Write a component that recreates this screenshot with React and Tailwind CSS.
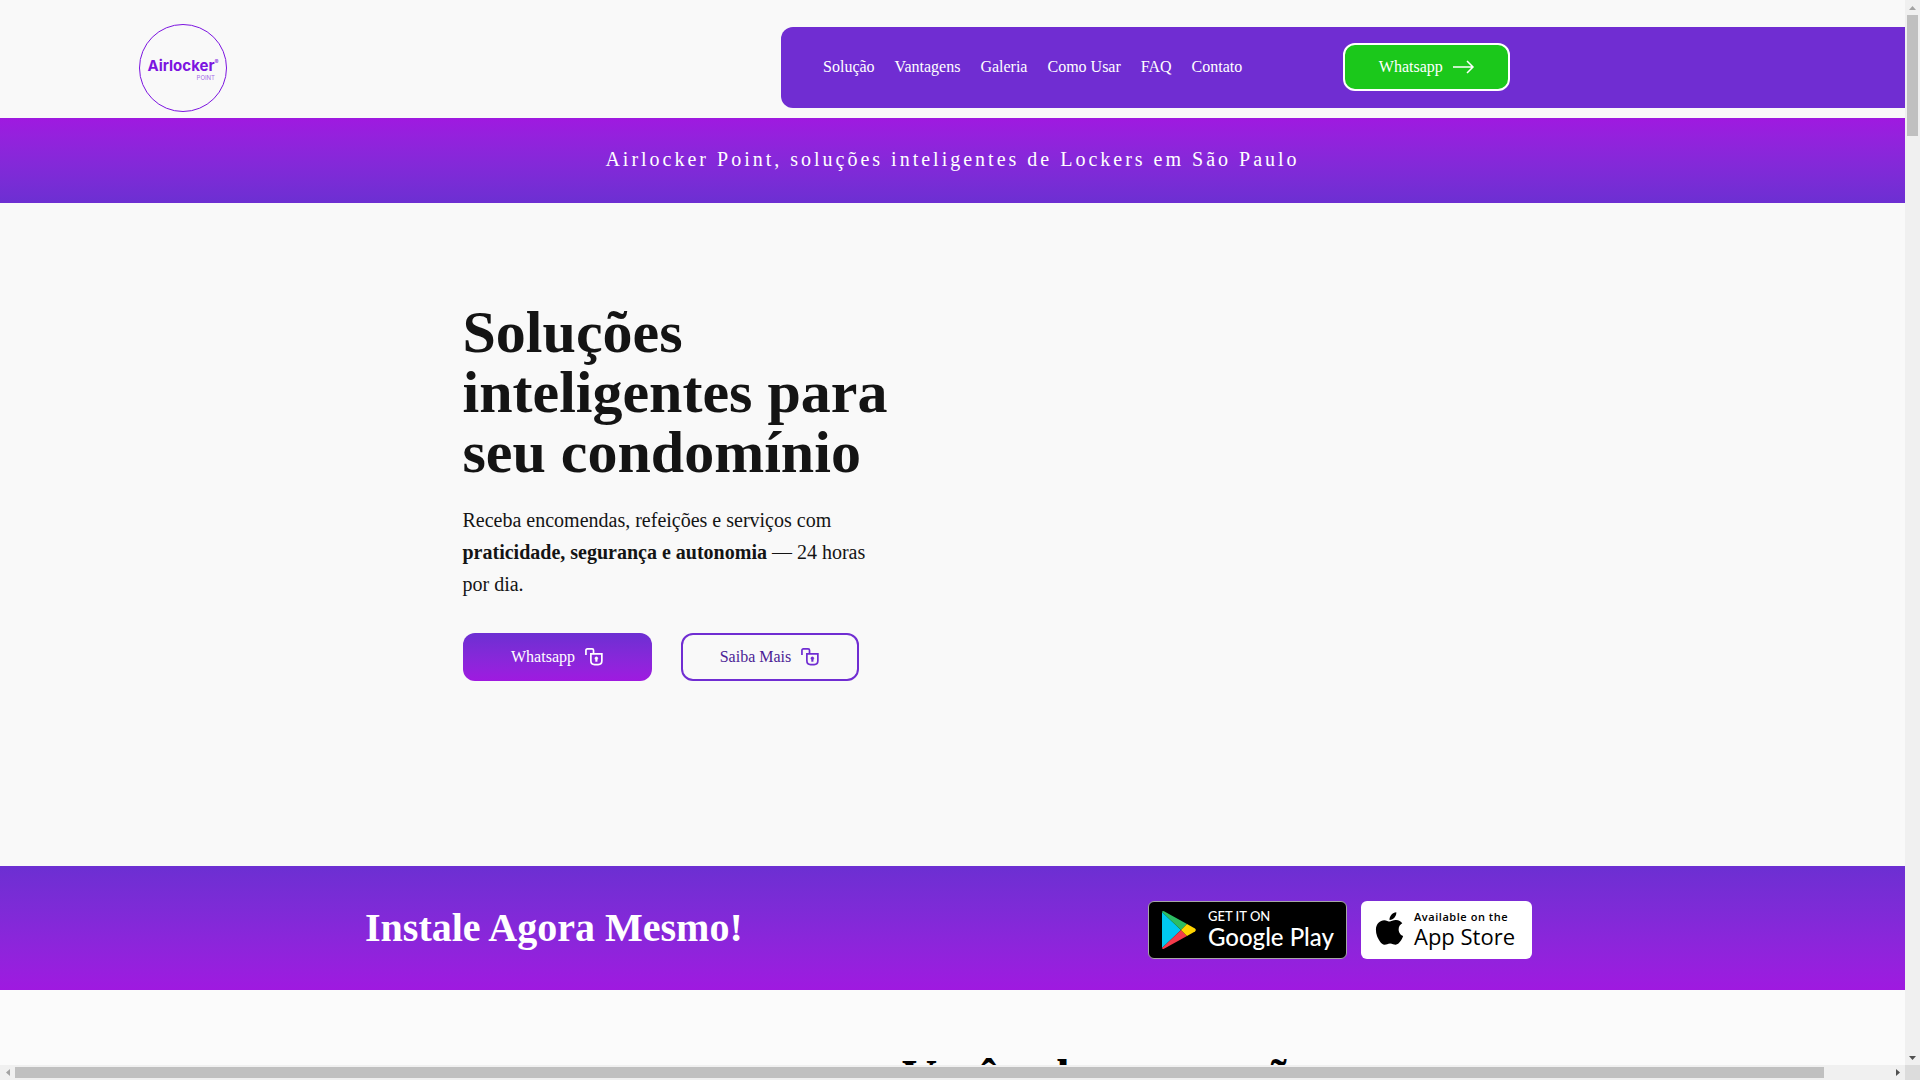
import { FaApple } from 'react-icons/fa'

const LINKS = [
  { href: '#solucao', label: 'Solução' },
  { href: '#vantagens', label: 'Vantagens' },
  { href: '#galeria', label: 'Galeria' },
  { href: '#como-usar', label: 'Como Usar' },
  { href: '#faq', label: 'FAQ' },
  { href: '#contato', label: 'Contato' },
]

function UnlockIcon({ className }) {
  return (
    <svg viewBox="0 0 19 19" width="18" height="18" fill="none" stroke="currentColor" strokeWidth="1.8" className={className} aria-hidden="true">
      <path d="M1 7.500V2.500Q1 1 2.500 1H7.500Q9 1 9 2.500V6" />
      <path d="M6.200 6.200h11.600v7.300q0 4-4 4h-3.600q-4 0-4-4z" />
      <path d="M12 9.300a1.700 1.700 0 0 1 .9 3.100v1.900h-1.800v-1.900a1.700 1.700 0 0 1 .9-3.100z" fill="currentColor" stroke="currentColor" strokeWidth="0.4" />
    </svg>
  )
}

function ArrowIcon() {
  return (
    <svg viewBox="0 0 22 14" width="22" height="14" fill="none" stroke="currentColor" strokeWidth="1.5" aria-hidden="true">
      <path d="M0 7h20M14 1l6 6-6 6" />
    </svg>
  )
}

function Logo() {
  return (
    <a href="#inicio" className="ml-[139px] flex size-[88px] shrink-0 flex-col items-center justify-center rounded-full border border-[#7c14e0] font-['Inter',sans-serif] text-[#7c14e0]">
      <span className="flex pt-1 text-[15px] leading-[16px] font-bold">
        Airlocker<sup className="top-0 text-[6px] leading-[8px] font-normal">®</sup>
      </span>
      <span className="mr-[11px] self-end text-[6px] leading-[7px] text-[#a66be8]">POINT</span>
    </a>
  )
}

function GooglePlayBadge() {
  return (
    <a href="#google-play" className="flex h-[58px] w-[199px] items-center gap-3 rounded-md border border-[#a6a6a6] bg-black pl-[13px] text-white">
      <svg viewBox="0 0 34 38" width="34" height="38" className="shrink-0" aria-hidden="true">
        <path d="M0 1v36l19-18z" fill="#00c8f0" />
        <path d="M0 1q.5-1.500 2-.7L25 13l-6 6z" fill="#2dbd63" />
        <path d="M0 37q.5 1.500 2 .7L25 25l-6-6z" fill="#f43b4b" />
        <path d="M25 13l8 4.600q1.600 1.400 0 2.800L25 25l-6-6z" fill="#ffd400" />
      </svg>
      <span className="flex flex-col font-['Lato',sans-serif] font-medium whitespace-nowrap">
        <span className="text-[13px] leading-[14px]">GET IT ON</span>
        <span className="text-[24px] leading-[28px]">Google Play</span>
      </span>
    </a>
  )
}

function AppStoreBadge() {
  return (
    <a href="#app-store" className="flex h-[58px] w-[171px] items-center gap-1.5 rounded-md bg-white pl-2.5 text-black">
      <FaApple size={37} className="mb-1 shrink-0" />
      <span className="flex flex-col font-['Open_Sans',sans-serif] whitespace-nowrap">
        <span className="text-[11px] leading-[12px] font-semibold tracking-wider">Available on the</span>
        <span className="text-[22px] leading-[26px] font-medium">App Store</span>
      </span>
    </a>
  )
}

function Header() {
  return (
    <header className="flex h-[118px] items-center justify-between pt-[17px]">
      <Logo />
      <nav className="flex h-[81px] w-[59%] items-center gap-[101px] rounded-l-xl bg-[#702dd2] pb-px pl-[42px] text-white">
        <ul className="flex gap-5">
          {LINKS.map((l) => (
            <li key={l.href}>
              <a href={l.href} className="whitespace-nowrap">{l.label}</a>
            </li>
          ))}
        </ul>
        <a href="#whatsapp" className="flex h-12 w-[167px] items-center justify-center gap-2.5 rounded-xl border-2 border-white bg-[#1bc81b]">
          Whatsapp <ArrowIcon />
        </a>
      </nav>
    </header>
  )
}

function Hero() {
  return (
    <section className="mx-auto w-full max-w-[980px] pt-[99px] pb-[185px] text-[#141414]">
      <h1 className="w-[440px] text-[60px] leading-[60px] font-bold">Soluções inteligentes para seu condomínio</h1>
      <p className="mt-[22px] w-[420px] text-xl leading-8">
        Receba encomendas, refeições e serviços com <strong>praticidade, segurança e autonomia</strong> — 24 horas por dia.
      </p>
      <div className="mt-[33px] flex gap-[29px]">
        <a href="#whatsapp" className="flex h-12 w-[189px] items-center justify-center gap-2.5 rounded-xl bg-linear-to-b from-[#6c2fd2] to-[#9f19e0] text-white">
          Whatsapp <UnlockIcon />
        </a>
        <a href="#solucao" className="flex h-12 w-[178px] items-center justify-center gap-2.5 rounded-xl border-2 border-[#702dd2] text-[#4c1d95]">
          Saiba Mais <UnlockIcon className="text-[#702dd2]" />
        </a>
      </div>
    </section>
  )
}

function VerticalScrollbar() {
  return (
    <div className="flex w-[15px] shrink-0 flex-col items-center justify-between bg-[#f0f0f0]">
      <div className="flex w-full flex-col items-center">
        <div className="flex h-[15px] shrink-0 items-center">
          <svg viewBox="0 0 7 4" width="7" height="4" aria-hidden="true"><path d="M0 4L3.500 0 7 4z" fill="#a3a3a3" /></svg>
        </div>
        <div className="h-[121px] w-[11px] shrink-0 bg-[#c0c0c0]" />
      </div>
      <div className="flex h-[15px] items-center">
        <svg viewBox="0 0 7 4" width="7" height="4" aria-hidden="true"><path d="M0 0h7L3.500 4z" fill="#505050" /></svg>
      </div>
    </div>
  )
}

function HorizontalScrollbar() {
  return (
    <div className="flex h-[15px] shrink-0">
      <div className="flex flex-1 items-center bg-[#f0f0f0]">
        <div className="flex w-[15px] justify-center">
          <svg viewBox="0 0 4 7" width="4" height="7" aria-hidden="true"><path d="M4 0v7L0 3.500z" fill="#a3a3a3" /></svg>
        </div>
        <div className="flex-1">
          <div className="h-[11px] w-[96.5%] bg-[#c0c0c0]" />
        </div>
        <div className="flex w-[15px] justify-center">
          <svg viewBox="0 0 4 7" width="4" height="7" aria-hidden="true"><path d="M0 0v7l4-3.500z" fill="#505050" /></svg>
        </div>
      </div>
      <div className="w-[15px] bg-[#dcdcdc]" />
    </div>
  )
}

export default function App() {
  return (
    <div className="flex h-screen flex-col bg-[#f9f9f9] font-['Liberation_Serif',serif] text-base">
      <div className="flex min-h-0 flex-1">
        <main className="min-w-0 flex-1 overflow-hidden">
          <Header />
          <div className="bg-linear-to-b from-[#9f19e0] to-[#6c2fd2] pt-[27px] pb-[29px] text-center text-xl leading-[29px] tracking-[3px] text-white">
            Airlocker Point, soluções inteligentes de Lockers em São Paulo
          </div>
          <Hero />
          <section className="bg-linear-to-b from-[#6c2fd2] to-[#9f19e0] pt-[35px] pb-[31px]">
            <div className="mx-auto flex max-w-[1175px] items-center justify-between pr-2">
              <h2 className="text-[40px] leading-[54px] font-bold text-white">
                <span className="block pb-1">Instale Agora Mesmo!</span>
              </h2>
              <div className="flex gap-3.5">
                <GooglePlayBadge />
                <AppStoreBadge />
              </div>
            </div>
          </section>
          <section className="bg-[#fbfbfb] pt-[58px] pl-[902px]">
            <h2 className="text-5xl leading-[58px] font-bold whitespace-nowrap text-black">Você acha que serão</h2>
          </section>
        </main>
        <VerticalScrollbar />
      </div>
      <HorizontalScrollbar />
    </div>
  )
}
